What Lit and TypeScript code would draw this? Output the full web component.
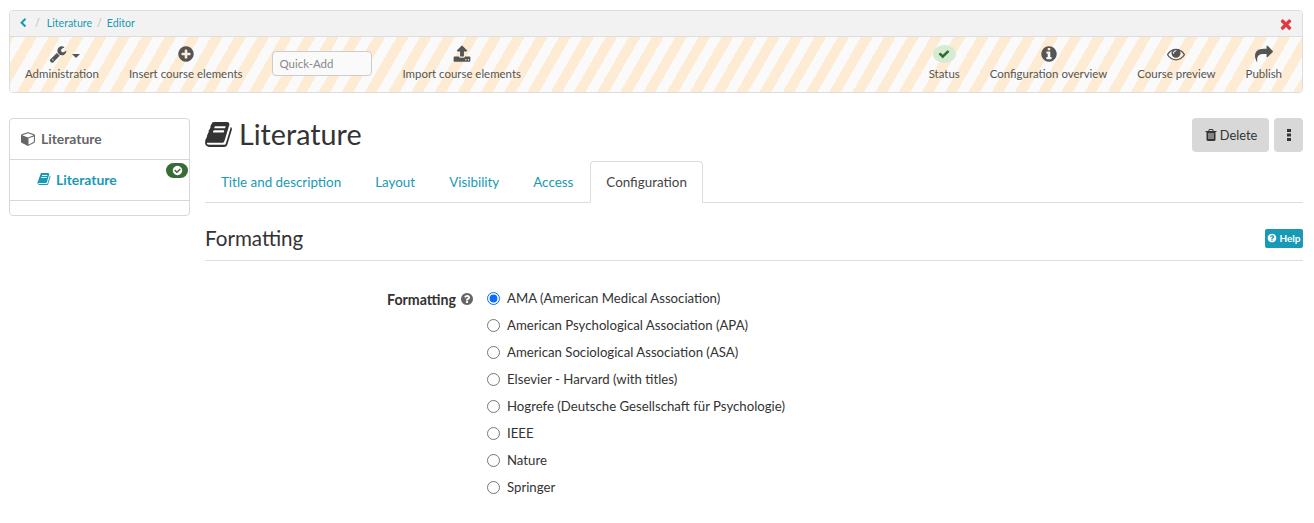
import { LitElement, css, html, svg } from "lit";
import { customElement } from "lit/decorators.js";

const ICONS: Record<string, string> = {
  wrench: "M448 1472q0-26-19-45t-45-19-45 19-19 45 19 45 45 19 45-19 19-45zm644-420l-682 682q-37 37-90 37-52 0-91-37l-106-108q-38-36-38-90 0-53 38-91l681-681q39 98 114.5 173.5t173.5 114.5zm634-435q0 39-23 106-47 134-164.5 217.5t-258.5 83.5q-185 0-316.5-131.5t-131.5-316.5 131.5-316.5 316.5-131.5q58 0 121.5 16.5t107.5 46.5q16 11 16 28t-16 28l-293 169v224l193 107q5-3 79-48.5t135.5-81 70.5-35.5q15 0 23.5 10t8.5 25z",
  plus: "M1344 960v-128q0-26-19-45t-45-19h-256v-256q0-26-19-45t-45-19h-128q-26 0-45 19t-19 45v256h-256q-26 0-45 19t-19 45v128q0 26 19 45t45 19h256v256q0 26 19 45t45 19h128q26 0 45-19t19-45v-256h256q26 0 45-19t19-45zm320-64q0 209-103 385.5t-279.5 279.5-385.5 103-385.5-103-279.5-279.5-103-385.5 103-385.5 279.5-279.5 385.5-103 385.5 103 279.5 279.5 103 385.5z",
  info: "M1152 1376v-160q0-14-9-23t-23-9h-96v-512q0-14-9-23t-23-9h-320q-14 0-23 9t-9 23v160q0 14 9 23t23 9h96v320h-96q-14 0-23 9t-9 23v160q0 14 9 23t23 9h448q14 0 23-9t9-23zm-128-896v-160q0-14-9-23t-23-9h-192q-14 0-23 9t-9 23v160q0 14 9 23t23 9h192q14 0 23-9t9-23zm640 416q0 209-103 385.5t-279.5 279.5-385.5 103-385.5-103-279.5-279.5-103-385.5 103-385.5 279.5-279.5 385.5-103 385.5 103 279.5 279.5 103 385.5z",
  question: "M1024 1376v-192q0-14-9-23t-23-9h-192q-14 0-23 9t-9 23v192q0 14 9 23t23 9h192q14 0 23-9t9-23zm256-672q0-88-55.5-163t-138.5-116-170-41q-243 0-371 213-15 24 8 42l132 100q7 6 19 6 16 0 25-12 53-68 86-92 34-24 86-24 48 0 85.5 26t37.5 59q0 38-20 61t-68 45q-63 28-115.5 86.5t-52.5 125.5v36q0 14 9 23t23 9h192q14 0 23-9t9-23q0-19 21.5-49.5t54.5-49.5q32-18 49-28.5t46-35 44.5-48 28-60.5 12.5-81zm384 192q0 209-103 385.5t-279.5 279.5-385.5 103-385.5-103-279.5-279.5-103-385.5 103-385.5 279.5-279.5 385.5-103 385.5 103 279.5 279.5 103 385.5z",
  eye: "M1664 960q-152-236-381-353 61 104 61 225 0 185-131.5 316.5t-316.5 131.5-316.5-131.5-131.5-316.5q0-121 61-225-229 117-381 353 133 205 333.5 326.5t434.5 121.5 434.5-121.5 333.5-326.5zm-720-384q0-20-14-34t-34-14q-125 0-214.5 89.5t-89.5 214.5q0 20 14 34t34 14 34-14 14-34q0-86 61-147t147-61q20 0 34-14t14-34zm848 384q0 34-20 69-140 230-376.5 368.5t-499.5 138.5-499.5-139-376.5-368q-20-35-20-69t20-69q140-229 376.5-368t499.5-139 499.5 139 376.5 368q20 35 20 69z",
  share: "M1792 640q0 26-19 45l-512 512q-19 19-45 19t-45-19-19-45v-256h-224q-98 0-175.5 6t-154 21.5-133 42.5-105.5 69.5-80 101-48.5 138.5-17.5 181q0 55 5 123 0 6 2.5 23.5t2.5 26.5q0 15-8.5 25t-23.5 10q-16 0-28-17-7-9-13-22t-13.5-30-10.5-24q-127-285-127-451 0-199 53-333 162-403 875-403h224v-256q0-26 19-45t45-19 45 19l512 512q19 19 19 45z",
  upload: "M1344 1472q0-26-19-45t-45-19-45 19-19 45 19 45 45 19 45-19 19-45zm256 0q0-26-19-45t-45-19-45 19-19 45 19 45 45 19 45-19 19-45zm128-224v320q0 40-28 68t-68 28h-1472q-40 0-68-28t-28-68v-320q0-40 28-68t68-28h427q21 56 70.5 92t110.5 36h256q61 0 110.5-36t70.5-92h427q40 0 68 28t28 68zm-325-648q-17 40-59 40h-256v448q0 26-19 45t-45 19h-256q-26 0-45-19t-19-45v-448h-256q-42 0-59-40-17-39 14-69l448-448q18-19 45-19t45 19l448 448q31 30 14 69z",
  times: "M1490 1322q0 40-28 68l-136 136q-28 28-68 28t-68-28l-294-294-294 294q-28 28-68 28t-68-28l-136-136q-28-28-28-68t28-68l294-294-294-294q-28-28-28-68t28-68l136-136q28-28 68-28t68 28l294 294 294-294q28-28 68-28t68 28l136 136q28 28 28 68t-28 68l-294 294 294 294q28 28 28 68z",
  check: "M1671 566q0 40-28 68l-724 724-136 136q-28 28-68 28t-68-28l-136-136-362-362q-28-28-28-68t28-68l136-136q28-28 68-28t68 28l294 295 656-657q28-28 68-28t68 28l136 136q28 28 28 68z",
  back: "M1427 301l-531 531 531 531q19 19 19 45t-19 45l-166 166q-19 19-45 19t-45-19l-742-742q-19-19-19-45t19-45l742-742q19-19 45-19t45 19l166 166q19 19 19 45t-19 45z",
  book: "M1703 478q40 57 18 129l-275 906q-19 64-76.5 107.5t-122.5 43.5h-923q-77 0-148.5-53.5t-99.5-131.5q-24-67-2-127 0-4 3-27t4-37q1-8-3-21.5t-3-19.5q2-11 8-21t16.5-23.5 16.5-23.5q23-38 45-91.5t30-91.5q3-10 .5-30t-.5-28q3-11 17-28t17-23q21-36 42-92t25-90q1-9-2.5-32t.5-28q4-13 22-30.5t22-22.5q19-26 42.5-84.5t27.5-96.5q1-8-3-25.5t-2-26.5q2-8 9-18t18-23 17-21q8-12 16.5-30.5t15-35 16-36 19.5-32 26.5-23.5 36-11.5 47.5 5.5l-1 3q38-9 51-9h761q74 0 114 56t18 130l-274 906q-36 119-71.5 153.5t-128.5 34.5h-869q-27 0-38 15-11 16-1 43 24 70 144 70h923q29 0 56-15.5t35-41.5l300-987q7-22 5-57 38 15 59 43zm-1064 2q-4 13 2 22.5t20 9.5h608q13 0 25.5-9.5t16.5-22.5l21-64q4-13-2-22.5t-20-9.5h-608q-13 0-25.5 9.5t-16.5 22.5zm-83 256q-4 13 2 22.5t20 9.5h608q13 0 25.5-9.5t16.5-22.5l21-64q4-13-2-22.5t-20-9.5h-608q-13 0-25.5 9.5t-16.5 22.5z",
  cube: "M896 1629l640-349v-636l-640 233v752zm-64-865l698-254-698-254-698 254zm832-252v768q0 35-18 65t-49 47l-704 384q-28 16-61 16t-61-16l-704-384q-31-17-49-47t-18-65v-768q0-40 23-73t61-47l704-256q22-8 44-8t44 8l704 256q38 14 61 47t23 73z",
  trash: "M704 1376v-704q0-14-9-23t-23-9h-64q-14 0-23 9t-9 23v704q0 14 9 23t23 9h64q14 0 23-9t9-23zm256 0v-704q0-14-9-23t-23-9h-64q-14 0-23 9t-9 23v704q0 14 9 23t23 9h64q14 0 23-9t9-23zm256 0v-704q0-14-9-23t-23-9h-64q-14 0-23 9t-9 23v704q0 14 9 23t23 9h64q14 0 23-9t9-23zm-544-992h448l-48-117q-7-9-17-11h-317q-10 2-17 11zm928 32v64q0 14-9 23t-23 9h-96v948q0 83-47 143.5t-113 60.5h-832q-66 0-113-58.5t-47-141.5v-952h-96q-14 0-23-9t-9-23v-64q0-14 9-23t23-9h309l70-167q15-37 54-63t79-26h320q40 0 79 26t54 63l70 167h309q14 0 23 9t9 23z",
  okCircle: "M1412 734q0-28-18-46l-91-90q-19-19-45-19t-45 19l-408 407-226-226q-19-19-45-19t-45 19l-91 90q-18 18-18 46 0 27 18 45l362 362q19 19 45 19 27 0 46-19l543-543q18-18 18-45zm252 162q0 209-103 385.5t-279.5 279.5-385.5 103-385.5-103-279.5-279.5-103-385.5 103-385.5 279.5-279.5 385.5-103 385.5 103 279.5 279.5 103 385.5z",
};

const icon = (name: string, size: number) => html`<svg
  class="icon"
  width=${size}
  height=${size}
  viewBox="0 0 1792 1792"
  fill="currentColor"
>
  ${svg`<path d=${ICONS[name]}></path>`}
</svg>`;

const STYLES = [
  "AMA (American Medical Association)",
  "American Psychological Association (APA)",
  "American Sociological Association (ASA)",
  "Elsevier - Harvard (with titles)",
  "Hogrefe (Deutsche Gesellschaft für Psychologie)",
  "IEEE",
  "Nature",
  "Springer",
];

const TABS = ["Title and description", "Layout", "Visibility", "Access", "Configuration"];

@customElement("app-root")
export class AppRoot extends LitElement {
  static styles = css`
    :host {
      display: block;
      height: 523px;
      overflow: hidden;
      padding: 10px 11px 0 9px;
      box-sizing: border-box;
      font-family: "Lato", "Noto Sans", sans-serif;
      font-size: 14px;
      color: #333;
      background: #fff;
    }
    .icon {
      display: block;
      flex: none;
    }
    a {
      color: #1899b5;
      text-decoration: none;
    }

    .toolbar {
      border: 1px solid #ddd;
      border-radius: 4px;
      overflow: hidden;
      height: 83px;
      box-sizing: border-box;
    }
    .crumbs {
      height: 26px;
      box-sizing: border-box;
      background: #f2f2f2;
      border-bottom: 1px solid #ddd;
      display: flex;
      align-items: center;
      padding: 0 9px 2px 8px;
      font-size: 10.6px;
      color: #bbb;
    }
    .crumbs .back {
      color: #1899b5;
      margin-right: 7px;
    }
    .crumbs .sep {
      margin: 0 5px;
    }
    .crumbs .sep.first {
      margin: 0 7px 0 0;
    }
    .crumbs .close {
      margin: 2px -1px 0 auto;
      color: #e2383f;
    }
    .tools {
      height: 55px;
      display: flex;
      align-items: flex-start;
      padding: 0 5px 0 0;
      background: repeating-linear-gradient(
        120deg,
        #fdecd3 0,
        #fdecd3 3.3px,
        #fafafa 3.3px,
        #fafafa 13.35px,
        #fdecd3 13.35px,
        #fdecd3 20.1px
      );
    }
    .tool {
      display: flex;
      flex-direction: column;
      align-items: center;
      padding: 8px 15px 0;
      color: #555;
      font-size: 11.45px;
      line-height: 16px;
      white-space: nowrap;
    }
    .tool .glyph {
      height: 18px;
      display: flex;
      align-items: center;
      justify-content: center;
      gap: 5px;
      margin-bottom: 3px;
    }
    .tool .glyph.admin {
      margin-left: 5px;
    }
    .caret {
      width: 0;
      height: 0;
      border: 4px solid transparent;
      border-top-color: #555;
      border-bottom: 0;
      margin-top: 3px;
    }
    .spacer {
      flex: 1;
    }
    .quick {
      width: 100px;
      height: 25px;
      box-sizing: border-box;
      margin: 14px 15px 0;
      padding: 0 6px;
      border: 1px solid #ccc;
      border-radius: 4px;
      background: #fafafa;
      font: inherit;
      font-size: 11.45px;
      color: #555;
    }
    .quick::placeholder {
      color: #888;
    }
    .status {
      width: 23px;
      height: 18px;
      border-radius: 50%;
      background: #d5ecd3;
      color: #2f6f2f;
      display: flex;
      align-items: center;
      justify-content: center;
    }

    .main {
      display: flex;
      margin-top: 25px;
      align-items: flex-start;
    }
    .side {
      width: 181px;
      height: 98px;
      box-sizing: border-box;
      border: 1px solid #d8d8d8;
      border-radius: 4px;
      flex: none;
      margin-right: 15px;
    }
    .side .row {
      height: 41px;
      box-sizing: border-box;
      border-bottom: 1px solid #d8d8d8;
      padding-bottom: 2px;
      display: flex;
      align-items: center;
      gap: 5px;
      font-weight: 700;
      font-size: 13.9px;
      position: relative;
    }
    .side .root {
      padding-left: 11px;
      color: #666;
    }
    .side .child {
      padding-left: 27px;
      color: #1899b5;
    }
    .badge {
      position: absolute;
      top: 3px;
      right: 1px;
      width: 22px;
      height: 15px;
      border-radius: 8px;
      background: #386c35;
      color: #fff;
      display: flex;
      align-items: center;
      justify-content: center;
    }

    .content {
      flex: 1;
      min-width: 0;
    }
    .head {
      display: flex;
      align-items: flex-start;
      height: 43px;
    }
    .head h1 {
      flex: 1;
      margin: 0 0 0 -1px;
      display: flex;
      align-items: center;
      gap: 6px;
      height: 32px;
      font-size: 28.7px;
      font-weight: 400;
      color: #333;
    }
    .btn {
      height: 34px;
      box-sizing: border-box;
      border-radius: 4px;
      background: #d8d8d8;
      color: #333;
      display: flex;
      align-items: center;
      justify-content: center;
      gap: 2px;
      font-size: 12.8px;
    }
    .btn.delete {
      width: 77px;
      margin-right: 5px;
    }
    .btn.more {
      width: 29px;
    }
    .tabs {
      display: flex;
      height: 42px;
      box-sizing: border-box;
      border-bottom: 1px solid #ddd;
      gap: 2px;
    }
    .tab {
      padding: 0 15px 1px;
      height: 42px;
      box-sizing: border-box;
      border: 1px solid transparent;
      display: flex;
      align-items: center;
      font-size: 13.4px;
      white-space: nowrap;
    }
    .tab.active {
      margin-left: -1px;
      border-color: #ddd;
      border-bottom-color: #fff;
      border-radius: 4px 4px 0 0;
      color: #444;
    }
    .legend {
      display: flex;
      justify-content: space-between;
      align-items: center;
      height: 58px;
      box-sizing: border-box;
      padding-top: 13px;
      border-bottom: 1px solid #ddd;
    }
    .legend h3 {
      margin: 0;
      font-size: 20.6px;
      font-weight: 400;
      color: #333;
    }
    .help {
      width: 38px;
      height: 19px;
      border-radius: 2px;
      background: #1899b5;
      color: #fff;
      font-size: 10px;
      font-weight: 700;
      display: flex;
      align-items: center;
      justify-content: center;
      gap: 2px;
    }
    .form {
      display: grid;
      grid-template-columns: 269px 1fr;
      column-gap: 13px;
      margin-top: 23px;
    }
    .label {
      display: flex;
      justify-content: flex-end;
      align-items: center;
      gap: 4px;
      height: 27px;
      padding-top: 3px;
      box-sizing: border-box;
      font-weight: 700;
      font-size: 14.2px;
      color: #333;
    }
    .label .icon {
      color: #666;
    }
    .radio {
      display: flex;
      align-items: center;
      gap: 7px;
      height: 27px;
      font-size: 13.2px;
      color: #333;
    }
    .radio input {
      appearance: auto;
      width: 13px;
      height: 13px;
      margin: 1px 0 0;
      accent-color: #0b6dfb;
    }
  `;

  render() {
    return html`
      <div class="toolbar">
        <div class="crumbs">
          <a class="back" href="#">${icon("back", 10)}</a>
          <span class="sep first">/</span>
          <a href="#">Literature</a>
          <span class="sep">/</span>
          <a href="#">Editor</a>
          <span class="close">${icon("times", 16)}</span>
        </div>
        <div class="tools">
          <div class="tool">
            <span class="glyph admin">${icon("wrench", 18)}<span class="caret"></span></span>
            Administration
          </div>
          <div class="tool">
            <span class="glyph">${icon("plus", 18)}</span>
            Insert course elements
          </div>
          <input class="quick" placeholder="Quick-Add" />
          <div class="tool">
            <span class="glyph">${icon("upload", 18)}</span>
            Import course elements
          </div>
          <div class="spacer"></div>
          <div class="tool">
            <span class="glyph"><span class="status">${icon("check", 12)}</span></span>
            Status
          </div>
          <div class="tool">
            <span class="glyph">${icon("info", 18)}</span>
            Configuration overview
          </div>
          <div class="tool">
            <span class="glyph">${icon("eye", 18)}</span>
            Course preview
          </div>
          <div class="tool">
            <span class="glyph">${icon("share", 18)}</span>
            Publish
          </div>
        </div>
      </div>

      <div class="main">
        <div class="side">
          <div class="row root">${icon("cube", 15)} Literature</div>
          <div class="row child">
            ${icon("book", 14)} Literature
            <span class="badge">${icon("okCircle", 11)}</span>
          </div>
        </div>
        <div class="content">
          <div class="head">
            <h1>${icon("book", 29)} Literature</h1>
            <div class="btn delete">${icon("trash", 14)} Delete</div>
            <div class="btn more">
              <svg width="4" height="12" viewBox="0 0 4 12" fill="currentColor">
                <rect width="4" height="3" y="0"></rect>
                <rect width="4" height="3" y="4.5"></rect>
                <rect width="4" height="3" y="9"></rect>
              </svg>
            </div>
          </div>
          <div class="tabs">
            ${TABS.map(
              (t) =>
                html`<a class="tab ${t === "Configuration" ? "active" : ""}" href="#">${t}</a>`
            )}
          </div>
          <div class="legend">
            <h3>Formatting</h3>
            <span class="help">${icon("question", 10)}Help</span>
          </div>
          <div class="form">
            <div class="label">Formatting ${icon("question", 14)}</div>
            <div>
              ${STYLES.map(
                (s, i) => html`<label class="radio">
                  <input type="radio" name="style" ?checked=${i === 0} />${s}
                </label>`
              )}
            </div>
          </div>
        </div>
      </div>
    `;
  }
}
